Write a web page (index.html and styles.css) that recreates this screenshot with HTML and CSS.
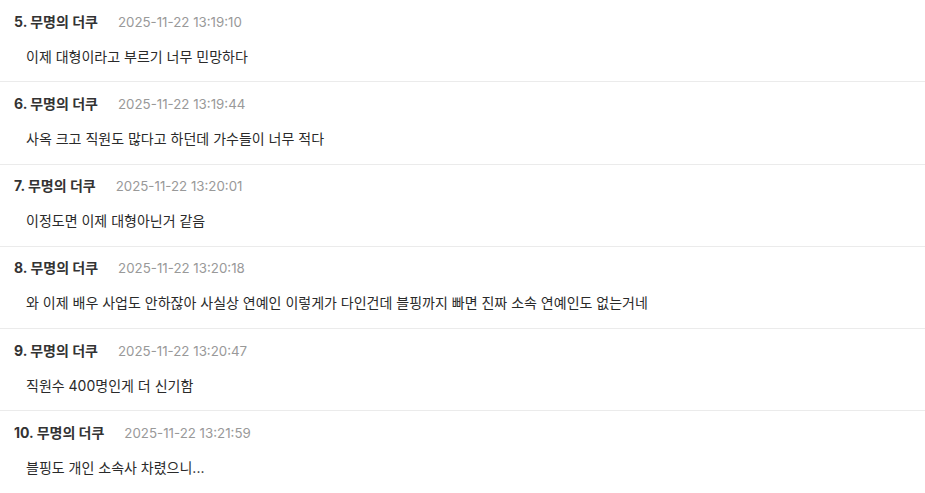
FILE: index.html
```html
<!DOCTYPE html>
<html lang="ko">
<head>
<meta charset="utf-8">
<link rel="stylesheet" href="styles.css">
</head>
<body>
<ul class="comments">
  <li class="comment">
    <div class="meta"><span class="name">5. 무명의 더쿠</span><span class="date">2025-11-22 13:19:10</span></div>
    <p class="text">이제 대형이라고 부르기 너무 민망하다</p>
  </li>
  <li class="comment">
    <div class="meta"><span class="name">6. 무명의 더쿠</span><span class="date">2025-11-22 13:19:44</span></div>
    <p class="text">사옥 크고 직원도 많다고 하던데 가수들이 너무 적다</p>
  </li>
  <li class="comment">
    <div class="meta"><span class="name">7. 무명의 더쿠</span><span class="date">2025-11-22 13:20:01</span></div>
    <p class="text">이정도면 이제 대형아닌거 같음</p>
  </li>
  <li class="comment">
    <div class="meta"><span class="name">8. 무명의 더쿠</span><span class="date">2025-11-22 13:20:18</span></div>
    <p class="text">와 이제 배우 사업도 안하잖아 사실상 연예인 이렇게가 다인건데 블핑까지 빠면 진짜 소속 연예인도 없는거네</p>
  </li>
  <li class="comment">
    <div class="meta"><span class="name">9. 무명의 더쿠</span><span class="date">2025-11-22 13:20:47</span></div>
    <p class="text">직원수 400명인게 더 신기함</p>
  </li>
  <li class="comment">
    <div class="meta"><span class="name">10. 무명의 더쿠</span><span class="date">2025-11-22 13:21:59</span></div>
    <p class="text">블핑도 개인 소속사 차렸으니...</p>
  </li>
</ul>
</body>
</html>
```
FILE: styles.css
```css
html, body {
  margin: 0;
  padding: 0;
  background: #ffffff;
}
body {
  font-family: Inter, "Noto Sans CJK KR", sans-serif;
  color: #333333;
}
.comments {
  list-style: none;
  margin: 0;
  padding: 0;
}
.comment {
  padding: 10.5px 14px 13.75px;
  border-bottom: 1px solid #ebebeb;
}
.meta {
  display: flex;
  align-items: center;
  height: 22px;
  line-height: 22px;
}
.name {
  font-size: 14px;
  font-weight: 700;
  color: #333333;
}
.date {
  margin-left: 20px;
  font-size: 13.3px;
  color: #999999;
}
.text {
  margin: 13px 0 0;
  padding-left: 12px;
  font-size: 14px;
  line-height: 22px;
  color: #2a2a2a;
}
```
